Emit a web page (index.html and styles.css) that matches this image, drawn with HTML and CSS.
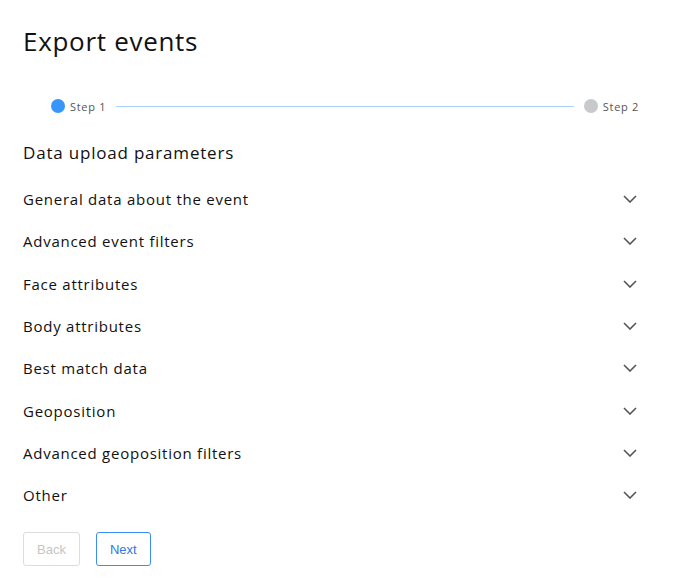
FILE: index.html
```html
<!DOCTYPE html>
<html lang="en">
<head>
	<meta charset="UTF-8">
	<title>Export events</title>
	<link rel="stylesheet" href="styles.css">
</head>
<body>
	<div class="export">
		<h1 class="export__title">Export events</h1>

		<div class="steps">
			<div class="steps__item steps__item_active">
				<span class="steps__dot"></span>
				<span class="steps__label">Step 1</span>
			</div>
			<div class="steps__line"></div>
			<div class="steps__item">
				<span class="steps__dot"></span>
				<span class="steps__label">Step 2</span>
			</div>
		</div>

		<h2 class="export__subtitle">Data upload parameters</h2>

		<div class="collapse">
			<div class="collapse__item"><span>General data about the event</span><svg class="collapse__arrow" viewBox="0 0 14 8"><path d="M1 1l6 6 6-6"/></svg></div>
			<div class="collapse__item"><span>Advanced event filters</span><svg class="collapse__arrow" viewBox="0 0 14 8"><path d="M1 1l6 6 6-6"/></svg></div>
			<div class="collapse__item"><span>Face attributes</span><svg class="collapse__arrow" viewBox="0 0 14 8"><path d="M1 1l6 6 6-6"/></svg></div>
			<div class="collapse__item"><span>Body attributes</span><svg class="collapse__arrow" viewBox="0 0 14 8"><path d="M1 1l6 6 6-6"/></svg></div>
			<div class="collapse__item"><span>Best match data</span><svg class="collapse__arrow" viewBox="0 0 14 8"><path d="M1 1l6 6 6-6"/></svg></div>
			<div class="collapse__item"><span>Geoposition</span><svg class="collapse__arrow" viewBox="0 0 14 8"><path d="M1 1l6 6 6-6"/></svg></div>
			<div class="collapse__item"><span>Advanced geoposition filters</span><svg class="collapse__arrow" viewBox="0 0 14 8"><path d="M1 1l6 6 6-6"/></svg></div>
			<div class="collapse__item"><span>Other</span><svg class="collapse__arrow" viewBox="0 0 14 8"><path d="M1 1l6 6 6-6"/></svg></div>
		</div>

		<div class="export__buttons">
			<button class="btn btn_disabled" disabled>Back</button>
			<button class="btn btn_primary">Next</button>
		</div>
	</div>
</body>
</html>
```

FILE: styles.css
```css
body {
	margin: 0;
	background-color: #fff;
	font-family: "Open Sans", "DejaVu Sans", sans-serif;
	color: #111;
}
.export {
	padding: 23px 36px 0 23px;
}
.export__title {
	margin: 0;
	font-size: 26px;
	font-weight: 500;
	line-height: 36px;
	letter-spacing: 0.7px;
}
.steps {
	display: flex;
	align-items: center;
	margin-top: 38px;
	padding-left: 28px;
	height: 18px;
}
.steps__item {
	display: flex;
	align-items: center;
}
.steps__dot {
	width: 14px;
	height: 14px;
	border-radius: 50%;
	background-color: #c8c9cc;
	margin-right: 5px;
}
.steps__item_active .steps__dot {
	background-color: #3795fc;
}
.steps__label {
	font-size: 11px;
	letter-spacing: 0.7px;
	color: #555;
}
.steps__line {
	flex: 1;
	height: 1px;
	background-color: #a9d1fb;
	margin: 0 10px;
}
.export__subtitle {
	margin: 26px 0 0;
	font-size: 17px;
	font-weight: 400;
	line-height: 24px;
	letter-spacing: 0.8px;
}
.collapse {
	margin-top: 13px;
}
.collapse__item {
	display: flex;
	align-items: center;
	justify-content: space-between;
	height: 42.3px;
	font-size: 15px;
	letter-spacing: 0.75px;
}
.collapse__arrow {
	width: 14px;
	height: 8px;
	margin-right: 2px;
	fill: none;
	stroke: #555;
	stroke-width: 1.6;
}
.export__buttons {
	display: flex;
	gap: 16px;
	margin-top: 16px;
}
.btn {
	height: 34px;
	padding: 0 13px;
	border: 1px solid #ddd;
	border-radius: 3px;
	background-color: #fff;
	font-family: "Liberation Sans", Arial, sans-serif;
	font-size: 13px;
}
.btn_disabled {
	color: #c5c5c5;
}
.btn_primary {
	border-color: #3a8ef6;
	color: #2f78e0;
}
```
